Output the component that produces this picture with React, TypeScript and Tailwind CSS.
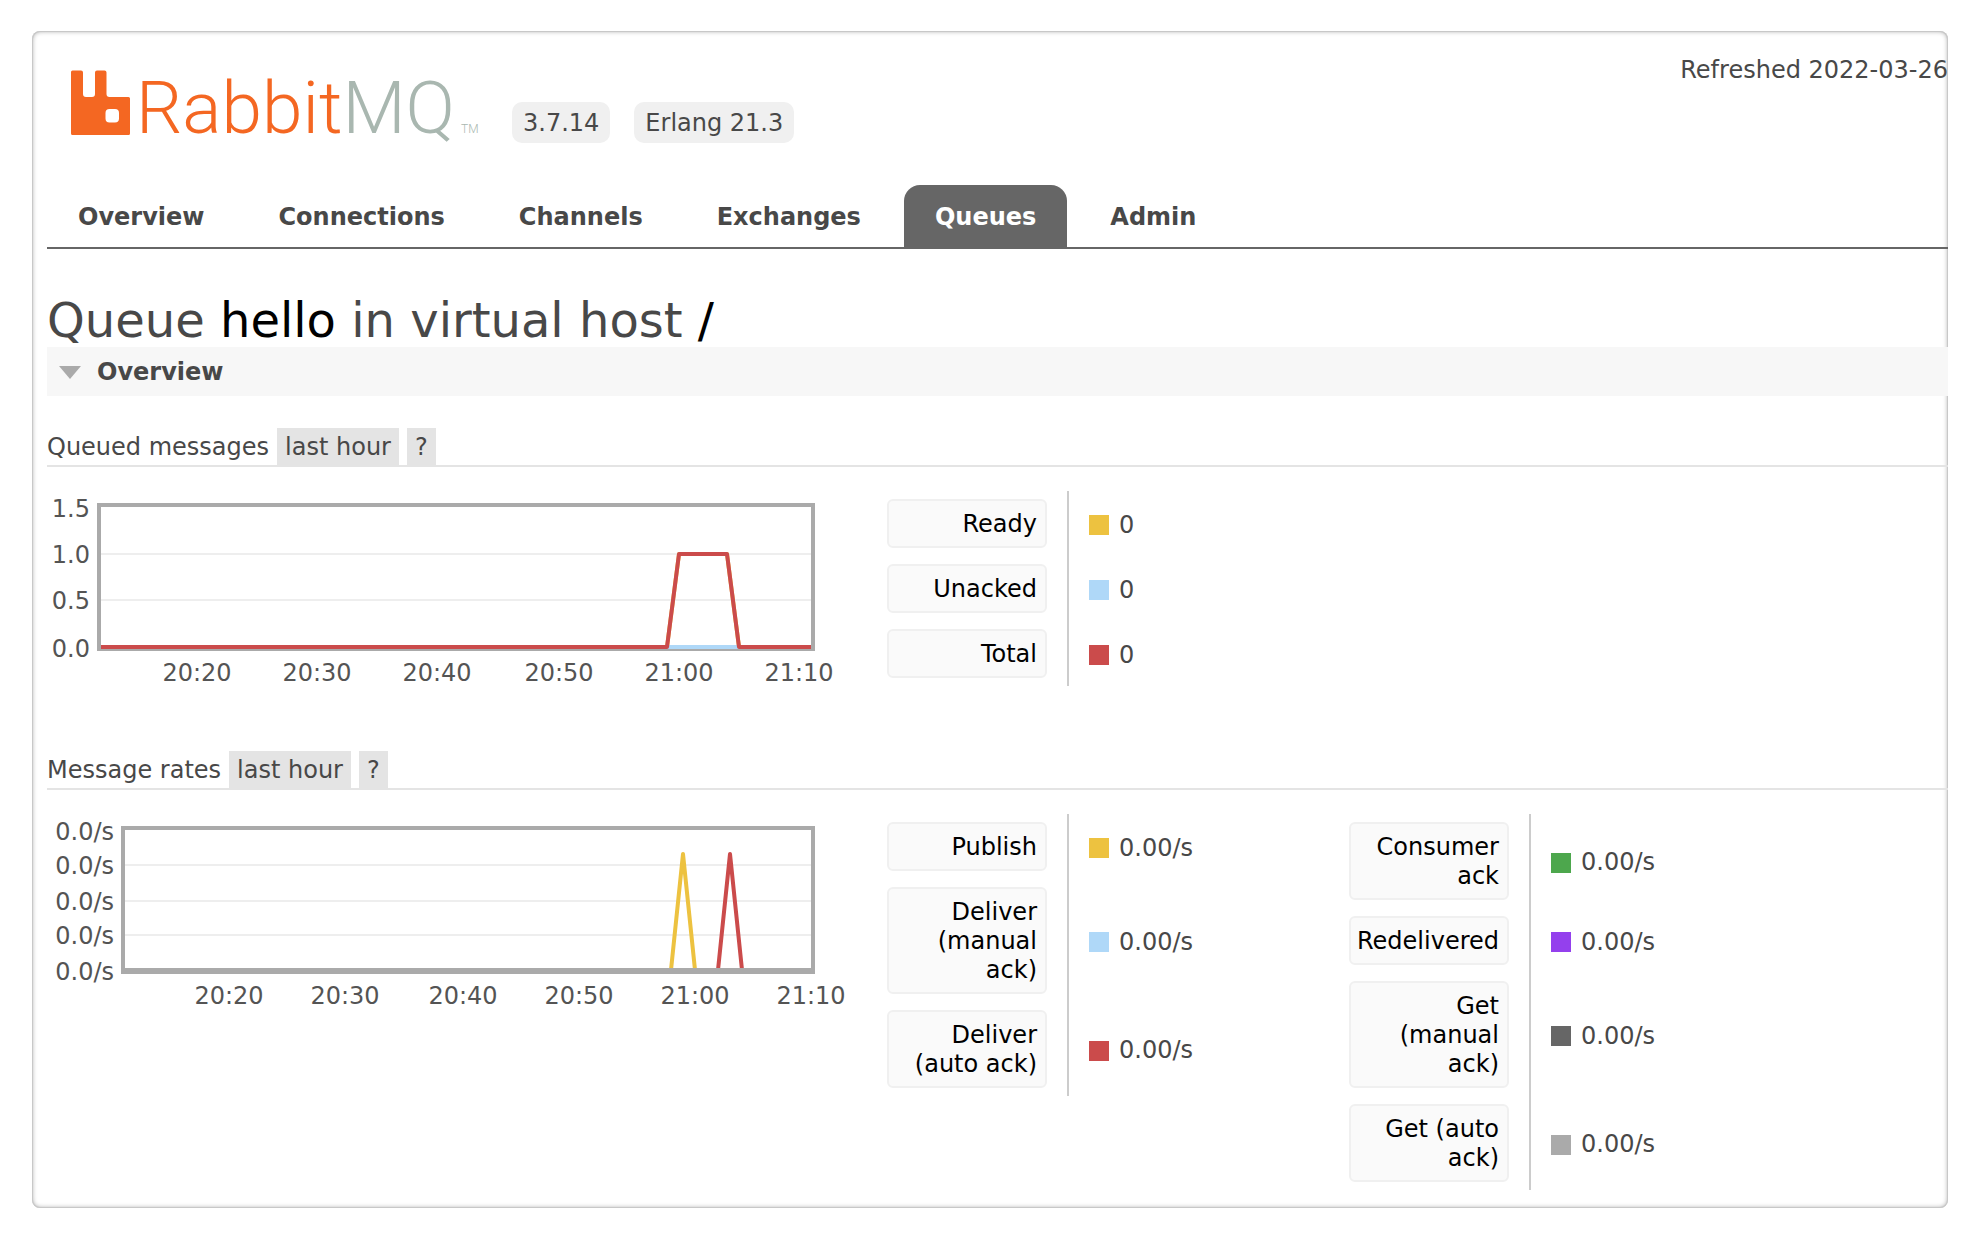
type Point = [number, number]

type Series = { color: string; points: Point[] }

type Label = { at: number; text: string }

type Rate = { name: string; value: string; swatch: string }

const TABS = ['Overview', 'Connections', 'Channels', 'Exchanges', 'Queues', 'Admin']

// baseline of both plots, in chart coordinates
const ZERO = 156

const QUEUED_SERIES: Series[] = [
  { color: '#edc240', points: [[54, ZERO], [620, ZERO], [632, 63], [680, 63], [692, ZERO], [764, ZERO]] },
  { color: '#afd8f8', points: [[54, ZERO], [764, ZERO]] },
  { color: '#cb4b4b', points: [[54, ZERO], [620, ZERO], [632, 63], [680, 63], [692, ZERO], [764, ZERO]] },
]

const RATE_SERIES: Series[] = [
  { color: '#edc240', points: [[624, ZERO], [636, 40], [648, ZERO]] },
  { color: '#cb4b4b', points: [[671, ZERO], [683, 40], [695, ZERO]] },
  { color: '#aaaaaa', points: [[76, ZERO], [764, ZERO]] },
]

const QUEUED: Rate[] = [
  { name: 'Ready', value: '0', swatch: 'bg-[#edc240]' },
  { name: 'Unacked', value: '0', swatch: 'bg-[#afd8f8]' },
  { name: 'Total', value: '0', swatch: 'bg-[#cb4b4b]' },
]

const RATES_LEFT: Rate[] = [
  { name: 'Publish', value: '0.00/s', swatch: 'bg-[#edc240]' },
  { name: 'Deliver (manual ack)', value: '0.00/s', swatch: 'bg-[#afd8f8]' },
  { name: 'Deliver (auto ack)', value: '0.00/s', swatch: 'bg-[#cb4b4b]' },
]

const RATES_RIGHT: Rate[] = [
  { name: 'Consumer ack', value: '0.00/s', swatch: 'bg-[#4da74d]' },
  { name: 'Redelivered', value: '0.00/s', swatch: 'bg-[#9440ed]' },
  { name: 'Get (manual ack)', value: '0.00/s', swatch: 'bg-[#666666]' },
  { name: 'Get (auto ack)', value: '0.00/s', swatch: 'bg-[#aaaaaa]' },
]

export default function App() {
  return (
    <div className="bg-white px-8 pt-[31px] pb-8 font-['DejaVu_Sans',Verdana,sans-serif] text-2xl leading-[29px] text-[#484848]">
      <div className="overflow-hidden rounded-lg pb-[18px] pl-[15px] shadow-[inset_0_0_0_1px_#c8c8c8,inset_0_0_5px_#999999]">
        <header className="flex items-start justify-between pb-[42px]">
          <div className="flex items-end gap-6 pt-[29px] pl-6">
            <a href="#/" aria-label="RabbitMQ">
              <Logo />
            </a>
            <Version>3.7.14</Version>
            <Version>Erlang 21.3</Version>
          </div>
          <div className="pt-[25px] whitespace-nowrap">Refreshed 2022-03-26</div>
        </header>

        <nav className="border-b-2 border-[#666666]">
          <ul className="flex gap-3">
            {TABS.map((tab) => (
              <li key={tab}>
                <a
                  href={`#/${tab.toLowerCase()}`}
                  className={
                    tab === 'Queues'
                      ? 'block rounded-t-2xl bg-[#666666] px-[31px] pt-[18px] pb-[15px] font-bold text-white'
                      : 'block px-[31px] pt-[18px] pb-[15px] font-bold'
                  }
                >
                  {tab}
                </a>
              </li>
            ))}
          </ul>
        </nav>

        <main>
          <h1 className="mt-[44px] text-5xl leading-[54px]">
            Queue <b className="font-normal text-black">hello</b> in virtual host{' '}
            <b className="font-normal text-black">/</b>
          </h1>

          <h2 className="bg-[#f7f7f7]">
            <button type="button" className="flex w-full items-center gap-4 pt-[11px] pb-[9px] pl-3 text-left font-bold">
              <svg width="22" height="13" viewBox="0 0 22 13" aria-hidden="true">
                <path d="M0 0h22L11 13z" fill="#aaaaaa" />
              </svg>
              Overview
            </button>
          </h2>

          <SectionTitle title="Queued messages" className="mt-8" />
          <div className="mt-6 flex items-start">
            <Chart
              title="Queued messages"
              left={50}
              grid={[63, 109]}
              yLabels={[
                { at: 26, text: '1.5' },
                { at: 72, text: '1.0' },
                { at: 118, text: '0.5' },
                { at: 166, text: '0.0' },
              ]}
              xLabels={[
                { at: 150, text: '20:20' },
                { at: 270, text: '20:30' },
                { at: 390, text: '20:40' },
                { at: 512, text: '20:50' },
                { at: 632, text: '21:00' },
                { at: 752, text: '21:10' },
              ]}
              series={QUEUED_SERIES}
            />
            <Legend rates={QUEUED} />
          </div>

          <SectionTitle title="Message rates" className="mt-[65px]" />
          <div className="mt-6 flex items-start">
            <Chart
              title="Message rates"
              left={74}
              grid={[51, 87, 121]}
              yLabels={[
                { at: 26, text: '0.0/s' },
                { at: 60, text: '0.0/s' },
                { at: 96, text: '0.0/s' },
                { at: 130, text: '0.0/s' },
                { at: 166, text: '0.0/s' },
              ]}
              xLabels={[
                { at: 182, text: '20:20' },
                { at: 298, text: '20:30' },
                { at: 416, text: '20:40' },
                { at: 532, text: '20:50' },
                { at: 648, text: '21:00' },
                { at: 764, text: '21:10' },
              ]}
              series={RATE_SERIES}
            />
            <Legend rates={RATES_LEFT} />
            <Legend rates={RATES_RIGHT} />
          </div>
        </main>
      </div>
    </div>
  )
}

function Version({ children }: { children: string }) {
  return <span className="rounded-[10px] bg-[#f0f0f0] px-[11px] pt-[7px] pb-[5px] whitespace-nowrap">{children}</span>
}

function SectionTitle({ title, className }: { title: string; className: string }) {
  return (
    <div className={`flex items-stretch gap-2 border-b-2 border-[#e4e4e4] ${className}`}>
      <h3 className="pt-[5px] pb-[3px]">{title}</h3>
      <button type="button" className="bg-[#e4e4e4] px-2 pt-[5px] pb-[3px]">
        last hour
      </button>
      <button type="button" className="bg-[#e4e4e4] px-2 pt-[5px] pb-[3px]" aria-label={`Help: ${title}`}>
        ?
      </button>
    </div>
  )
}

function Legend({ rates }: { rates: Rate[] }) {
  return (
    <table className="mr-[22px] w-[440px] shrink-0 table-fixed border-separate border-spacing-0">
      <tbody>
        {rates.map((rate) => (
          <tr key={rate.name}>
            <th scope="row" className="w-[190px] border-r-2 border-[#cccccc] py-2 pr-5 pl-2 font-normal">
              <button
                type="button"
                className="block w-40 rounded-md border-2 border-[#f0f0f0] bg-[#fafafa] pt-[9px] pr-2 pb-[7px] pl-1 text-right text-black"
              >
                {rate.name}
              </button>
            </th>
            <td className="pt-[3px] pl-5">
              <div className="flex items-center gap-[10px]">
                <span className={`size-5 ${rate.swatch}`} />
                {rate.value}
              </div>
            </td>
          </tr>
        ))}
      </tbody>
    </table>
  )
}

function Chart({
  title,
  left,
  grid,
  yLabels,
  xLabels,
  series,
}: {
  title: string
  left: number
  grid: number[]
  yLabels: Label[]
  xLabels: Label[]
  series: Series[]
}) {
  return (
    <svg width="832" height="195" viewBox="0 0 832 195" className="shrink-0" role="img" aria-label={title}>
      {grid.map((y) => (
        <path key={y} d={`M${left} ${y}H766`} stroke="#eeeeee" strokeWidth="2" />
      ))}
      <rect x={left + 2} y="14" width={764 - left} height="144" fill="none" stroke="#aaaaaa" strokeWidth="4" />
      {series.map((s) => (
        <polyline
          key={s.color}
          points={s.points.map((p) => p.join(',')).join(' ')}
          fill="none"
          stroke={s.color}
          strokeWidth="4"
          strokeLinejoin="round"
        />
      ))}
      <g fill="#545454" fontSize="24">
        {yLabels.map((l) => (
          <text key={l.at} x={left - 7} y={l.at} textAnchor="end">
            {l.text}
          </text>
        ))}
        {xLabels.map((l) => (
          <text key={l.at} x={l.at} y="190" textAnchor="middle">
            {l.text}
          </text>
        ))}
      </g>
    </svg>
  )
}

function Logo() {
  return (
    <svg width="417" height="83" viewBox="0 0 417 83" className="overflow-visible" aria-hidden="true">
      <path
        fill="#f46722"
        fillRule="evenodd"
        d="M0 12q0-1.500 1.500-1.500H10q2 0 2 2V34q0 3 3 3h6q3 0 3-3V12.500q0-2 2-2h7.500q2 0 2 2V34q0 3 3 3H57.500q1.500 0 1.500 1.500V73.500q0 1.500-1.500 1.500H1.500Q0 75 0 73.500ZM38.500 49q-4 0-4 4v5.500q0 4 4 4h5.500q4 0 4-4V53q0-4-4-4Z"
      />
      <text x="65" y="73" fontSize="73" fontWeight="300" fontFamily="Roboto, sans-serif" fill="#f46722">
        Rabbit
        <tspan fill="#a9b7b0">MQ</tspan>
      </text>
      <text x="390" y="73" fontSize="12" fontWeight="300" fontFamily="Roboto, sans-serif" fill="#a9b7b0">
        TM
      </text>
    </svg>
  )
}
